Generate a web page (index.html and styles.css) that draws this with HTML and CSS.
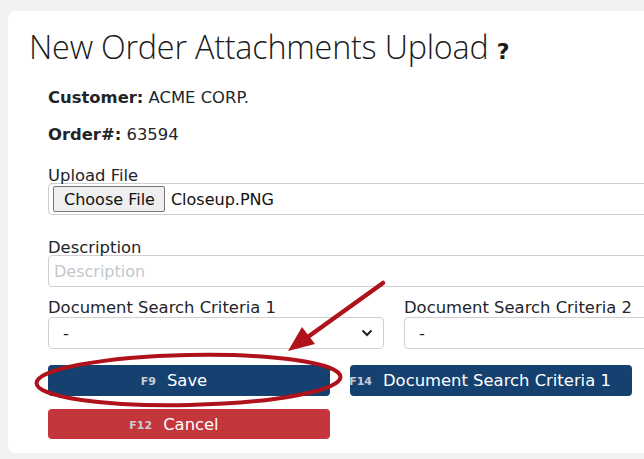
FILE: index.html
```html
<!DOCTYPE html>
<html>
<head>
<meta charset="utf-8">
<link rel="stylesheet" href="styles.css">
</head>
<body>
<div class="card">
  <h1 class="title">New Order Attachments Upload <span class="help">?</span></h1>
  <div class="content">
    <p class="info"><b>Customer:</b> ACME CORP.</p>
    <p class="info info-order"><b>Order#:</b> 63594</p>
    <div class="field">
      <label class="lbl">Upload File</label>
      <div class="box file-box"><span class="choose">Choose File</span><span class="fname">Closeup.PNG</span></div>
    </div>
    <div class="field field-desc">
      <label class="lbl">Description</label>
      <div class="box"><span class="ph">Description</span></div>
    </div>
    <div class="cols">
      <div class="col">
        <label class="lbl lbl-sel">Document Search Criteria 1</label>
        <div class="box select"><span>-</span>
          <svg class="chev" width="12" height="8" viewBox="0 0 12 8"><path d="M1.5 1.5 L6 6 L10.5 1.5" fill="none" stroke="#222" stroke-width="2"/></svg>
        </div>
      </div>
      <div class="col">
        <label class="lbl lbl-sel">Document Search Criteria 2</label>
        <div class="box select"><span>-</span></div>
      </div>
    </div>
    <div class="btnrow">
      <div class="btn btn-blue"><span class="fk">F9</span>Save</div>
      <div class="btn btn-blue btn-wide"><span class="fk">F14</span>Document Search Criteria 1</div>
    </div>
    <div class="btnrow btnrow-2">
      <div class="btn btn-red"><span class="fk">F12</span>Cancel</div>
    </div>
  </div>
  <svg class="annot" width="644" height="459" viewBox="0 0 644 459">
    <ellipse cx="188.5" cy="380" rx="152" ry="25" fill="none" stroke="#b0121b" stroke-width="4" transform="rotate(-1.2 188.5 380)"/>
    <line x1="383" y1="283" x2="305" y2="339" stroke="#b0121b" stroke-width="4.5" stroke-linecap="round"/>
    <polygon points="288,351 302,327 315,344" fill="#b0121b"/>
  </svg>
</div>
</body>
</html>
```
FILE: styles.css
```css
html, body {
  margin: 0;
  padding: 0;
  background: #f1f1f1;
  overflow: hidden;
  width: 644px;
  height: 459px;
}
.card {
  position: relative;
  margin: 11px 0 0 8px;
  width: 780px;
  height: 442px;
  background: #fff;
  border-radius: 7px;
  box-sizing: border-box;
  padding: 15px 0 0 21px;
  font-family: "DejaVu Sans", Verdana, sans-serif;
  color: #212529;
}
.title {
  margin: 0;
  font-family: "Open Sans", sans-serif;
  font-weight: 300;
  font-size: 32.3px;
  line-height: 40px;
  letter-spacing: -0.2px;
  color: #1b1b1b;
}
.help {
  font-family: "DejaVu Sans", sans-serif;
  font-weight: bold;
  font-size: 22px;
}
.content {
  padding-left: 19px;
}
.info {
  margin: 16px 0 0 0;
  font-size: 16.4px;
  line-height: 20px;
}
.info-order {
  margin-top: 17px;
}
.field {
  margin-top: 23px;
}
.field-desc {
  margin-top: 25px;
}
.lbl {
  display: block;
  font-size: 16.4px;
  line-height: 15px;
}
.lbl-sel {
  line-height: 18px;
}
.box {
  box-sizing: border-box;
  height: 32px;
  border: 1px solid #cfcfcf;
  border-radius: 4px;
  display: flex;
  align-items: center;
  font-size: 16.4px;
  width: 692px;
}
.file-box {
  padding-left: 4px;
}
.choose {
  box-sizing: border-box;
  height: 26px;
  display: flex;
  align-items: center;
  padding: 0 9px 0 10px;
  background: #efefef;
  border: 1px solid #767676;
  border-radius: 2px;
  color: #111;
  font-size: 16px;
}
.fname {
  margin-left: 6px;
  color: #111;
  font-size: 16px;
}
.ph {
  padding-left: 5px;
  color: #c3c7cc;
  font-size: 16px;
}
.cols {
  display: flex;
  gap: 20px;
  margin-top: 12px;
}
.col {
  width: 336px;
}
.col .box {
  width: 336px;
}
.select {
  padding-left: 14px;
  justify-content: space-between;
  padding-right: 8px;
  height: 32px;
}
.chev {
  margin-right: 2px;
}
.btnrow {
  display: flex;
  gap: 20px;
  margin-top: 16px;
}
.btnrow-2 {
  margin-top: 13px;
}
.btn {
  box-sizing: border-box;
  width: 282px;
  height: 31px;
  border-radius: 4px;
  color: #fff;
  font-size: 16.4px;
  display: flex;
  align-items: center;
  justify-content: center;
  padding-right: 30px;
  white-space: nowrap;
}
.btn-wide {
  padding-right: 22px;
}
.btn-blue {
  background: #154170;
}
.btn-red {
  background: #c5353c;
  height: 30px;
}
.fk {
  font-size: 11px;
  font-weight: bold;
  color: #c8ccd2;
  margin-right: 11px;
  padding-top: 2px;
}
.annot {
  position: absolute;
  left: -8px;
  top: -11px;
  pointer-events: none;
}
```
